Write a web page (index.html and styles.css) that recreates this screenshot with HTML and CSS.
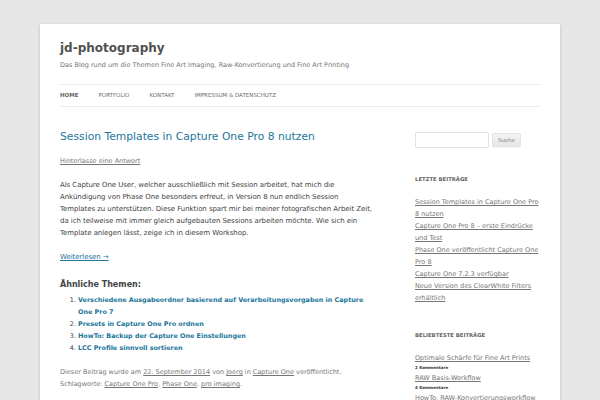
FILE: index.html
```html
<!DOCTYPE html>
<html lang="de">
<head>
<meta charset="utf-8">
<title>jd-photography</title>
<link rel="stylesheet" href="styles.css">
</head>
<body>
<div class="site">
  <header class="site-header">
    <h1 class="site-title"><a href="#">jd-photography</a></h1>
    <h2 class="site-description">Das Blog rund um die Themen Fine Art Imaging, Raw-Konvertierung und Fine Art Printing</h2>
    <nav class="main-navigation">
      <ul class="nav-menu">
        <li class="current"><a href="#">Home</a></li>
        <li><a href="#">Portfolio</a></li>
        <li><a href="#">Kontakt</a></li>
        <li><a href="#">Impressum &amp; Datenschutz</a></li>
      </ul>
    </nav>
  </header>
  <div class="main">
    <div class="site-content">
      <article class="post">
        <header class="entry-header">
          <h1 class="entry-title"><a href="#">Session Templates in Capture One Pro 8 nutzen</a></h1>
          <div class="comments-link"><a href="#">Hinterlasse eine Antwort</a></div>
        </header>
        <div class="entry-content">
          <p>Als Capture One User, welcher ausschließlich mit Session arbeitet, hat mich die Ankündigung von Phase One besonders erfreut, in Version 8 nun endlich Session Templates zu unterstützen. Diese Funktion spart mir bei meiner fotografischen Arbeit Zeit, da ich teilweise mit immer gleich aufgebauten Sessions arbeiten möchte. Wie sich ein Template anlegen lässt, zeige ich in diesem Workshop.</p>
          <p><a class="more-link" href="#">Weiterlesen →</a></p>
          <h3 class="related-title">Ähnliche Themen:</h3>
          <ol class="related">
            <li><a href="#">Verschiedene Ausgabeordner basierend auf Verarbeitungsvorgaben in Capture One Pro 7</a></li>
            <li><a href="#">Presets in Capture One Pro ordnen</a></li>
            <li><a href="#">HowTo: Backup der Capture One Einstellungen</a></li>
            <li><a href="#">LCC Profile sinnvoll sortieren</a></li>
          </ol>
        </div>
        <footer class="entry-meta">
          Dieser Beitrag wurde am <a href="#">22. September 2014</a> von <a href="#">Joerg</a> in <a href="#">Capture One</a> veröffentlicht.<br>
          Schlagworte: <a href="#">Capture One Pro</a>, <a href="#">Phase One</a>, <a href="#">pro imaging</a>.
        </footer>
      </article>
    </div>
    <aside class="widget-area">
      <section class="widget search-widget">
        <form class="searchform">
          <input class="search-input" type="text" aria-label="Suche">
          <button class="search-button" type="button">Suche</button>
        </form>
      </section>
      <section class="widget">
        <h3 class="widget-title">Letzte Beiträge</h3>
        <ul class="widget-list">
          <li><a href="#">Session Templates in Capture One Pro 8 nutzen</a></li>
          <li><a href="#">Capture One Pro 8 – erste Eindrücke und Test</a></li>
          <li><a href="#">Phase One veröffentlicht Capture One Pro 8</a></li>
          <li><a href="#">Capture One 7.2.3 verfügbar</a></li>
          <li><a href="#">Neue Version des ClearWhite Filters erhältlich</a></li>
        </ul>
      </section>
      <section class="widget">
        <h3 class="widget-title">Beliebteste Beiträge</h3>
        <ul class="widget-list popular">
          <li><a href="#">Optimale Schärfe für Fine Art Prints</a><span class="count">2 Kommentare</span></li>
          <li><a href="#">RAW Basis-Workflow</a><span class="count">4 Kommentare</span></li>
          <li><a href="#">HowTo: RAW-Konvertierungsworkflow</a><span class="count">3 Kommentare</span></li>
        </ul>
      </section>
    </aside>
  </div>
</div>
</body>
</html>
```
FILE: styles.css
```css
html {
  background: #e6e6e6;
}
body {
  margin: 0;
  padding: 0 40px;
  font-family: "DejaVu Sans", sans-serif;
  font-size: 7px;
  line-height: 12px;
  color: #444;
}
a {
  color: #21759b;
}
ul, ol {
  margin: 0;
  padding: 0;
}
h1, h2, h3, p {
  margin: 0;
}
.site {
  margin: 24px 0;
  padding: 0 20px;
  background: #fff;
  box-shadow: 0 1px 3px rgba(100, 100, 100, 0.3);
  overflow: hidden;
}
.site-header {
  padding: 12px 0;
}
.site-title {
  font-size: 12px;
  line-height: 16px;
  font-weight: bold;
  margin-top: 4px;
}
.site-title a {
  color: #515151;
  text-decoration: none;
}
.site-description {
  font-size: 6.5px;
  line-height: 12px;
  font-weight: normal;
  color: #757575;
  margin-top: 3px;
}
.main-navigation {
  margin-top: 13px;
}
.nav-menu {
  display: flex;
  border-top: 1px solid #ededed;
  border-bottom: 1px solid #ededed;
  list-style: none;
}
.nav-menu li {
  margin-right: 20px;
}
.nav-menu a {
  display: block;
  color: #6a6a6a;
  font-size: 5.5px;
  line-height: 21px;
  text-transform: uppercase;
  text-decoration: none;
}
.nav-menu .current a {
  color: #636363;
  font-weight: bold;
}
.main {
  display: flex;
  justify-content: space-between;
  align-items: flex-start;
}
.site-content {
  width: 312px;
  margin-top: 12px;
}
.entry-header {
  margin-bottom: 12px;
}
.entry-title {
  font-size: 10.75px;
  line-height: 12px;
  font-weight: normal;
}
.entry-title a {
  text-decoration: none;
}
.comments-link {
  margin-top: 12px;
  font-size: 6.5px;
  line-height: 12px;
}
.comments-link a {
  color: #757575;
}
.entry-content p {
  margin-bottom: 12px;
  letter-spacing: -0.06px;
}
.related-title {
  font-size: 8px;
  line-height: 19px;
}
.related {
  margin: 0 0 12px 18px;
  font-size: 6.4px;
}
.related a {
  font-weight: bold;
  text-decoration: none;
}
.entry-meta {
  margin-top: 12px;
  font-size: 6.5px;
  line-height: 12px;
  color: #757575;
}
.entry-meta a {
  color: #757575;
}
.widget-area {
  width: 125px;
  margin-top: 12px;
}
.widget {
  margin-bottom: 26px;
}
.search-widget {
  margin-bottom: 26px;
}
.searchform {
  display: flex;
  align-items: center;
  gap: 3px;
  padding-top: 1px;
}
.search-input {
  width: 74px;
  height: 16px;
  box-sizing: border-box;
  margin: 0;
  padding: 0 3px;
  border: 1px solid #e2e2e2;
  border-radius: 2px;
  background: #fff;
}
.search-button {
  width: 29px;
  height: 14px;
  box-sizing: border-box;
  margin: 0;
  padding: 0;
  font-family: "DejaVu Sans", sans-serif;
  font-size: 5.5px;
  color: #7c7c7c;
  background: linear-gradient(#f4f4f4, #e6e6e6);
  border: 1px solid #e4e4e4;
  border-radius: 2px;
  box-shadow: 0 1px 1px rgba(64, 64, 64, 0.06);
}
.widget-title {
  font-size: 5.3px;
  line-height: 10px;
  font-weight: bold;
  text-transform: uppercase;
  color: #636363;
  margin-bottom: 12px;
}
.widget-list {
  list-style: none;
  font-size: 6.5px;
  line-height: 12px;
}
.widget-list a {
  color: #757575;
}
.popular a {
  display: block;
}
.count {
  display: block;
  font-size: 4px;
  line-height: 8px;
  font-weight: bold;
  color: #333;
}
```
